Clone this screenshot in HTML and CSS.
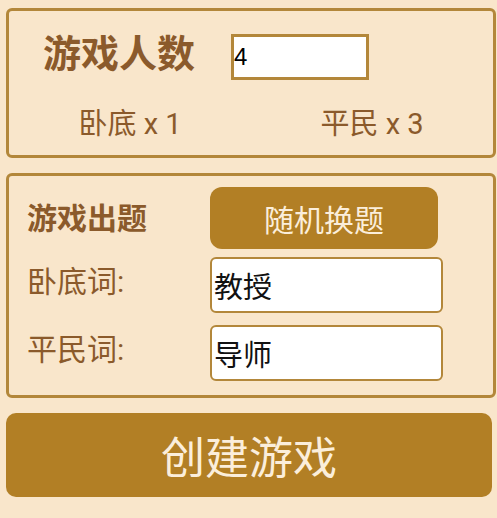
FILE: index.html
```html
<!DOCTYPE html>
<html lang="zh-CN">
<head>
    <meta charset="UTF-8">
    <meta name="viewport" content="width=device-width, initial-scale=1.0">
    <title>创建游戏</title>
    <link rel="stylesheet" href="styles.css">
</head>
<body>

    <div class="panel count-panel">
        <div class="count-row">
            <span class="count-title">游戏人数</span>
            <input class="count-input" type="text" value="4">
        </div>
        <div class="role-row">
            <span>卧底 x 1</span>
            <span>平民 x 3</span>
        </div>
    </div>

    <div class="panel word-panel">
        <div class="word-row first">
            <span class="word-title">游戏出题</span>
            <button class="swap-btn">随机换题</button>
        </div>
        <div class="word-row">
            <label class="word-label" for="spy-word">卧底词:</label>
            <input class="word-input" id="spy-word" type="text" value="教授">
        </div>
        <div class="word-row last">
            <label class="word-label" for="civ-word">平民词:</label>
            <input class="word-input" id="civ-word" type="text" value="导师">
        </div>
    </div>

    <button class="create-btn">创建游戏</button>

</body>
</html>
```

FILE: styles.css
```css
body {
    margin: 0;
    padding: 8px 0 0 6px;
    background-color: #f9e6cb;
    font-family: Roboto, "Noto Sans CJK SC", sans-serif;
    color: #8b5a2b;
}
.panel {
    box-sizing: border-box;
    width: 490px;
    border: 3px solid #b3873a;
    border-radius: 6px;
}
.count-panel {
    height: 150px;
    margin-bottom: 15px;
}
.count-row {
    display: flex;
    align-items: center;
    padding: 23px 0 0 34px;
}
.count-title {
    font-size: 38px;
    font-weight: bold;
    line-height: 40px;
    width: 188px;
    margin-top: -6px;
}
.count-input {
    box-sizing: border-box;
    width: 138px;
    height: 46px;
    border: 3px solid #b3873a;
    border-radius: 0;
    padding: 0;
    background: #fff;
    font-family: "Liberation Sans", sans-serif;
    font-size: 24px;
    color: #000;
    outline: none;
}
.role-row {
    display: grid;
    grid-template-columns: 1fr 1fr;
    margin-top: 28px;
    font-size: 29px;
    line-height: 32px;
    text-align: center;
}
.word-panel {
    height: 225px;
    margin-bottom: 15px;
    padding: 11px 0 0 18px;
}
.word-row {
    display: flex;
    align-items: center;
    margin-bottom: 8px;
}
.word-row.last {
    margin-top: 12px;
}
.word-title {
    width: 183px;
    font-size: 30px;
    font-weight: bold;
    margin-top: -4px;
}
.word-label {
    width: 183px;
    font-size: 30px;
    margin-top: -12px;
}
.swap-btn {
    width: 228px;
    height: 62px;
    border: none;
    border-radius: 12px;
    background-color: #b27f25;
    color: #fbeedb;
    font-family: Roboto, "Noto Sans CJK SC", sans-serif;
    font-size: 30px;
    padding: 0;
}
.word-input {
    box-sizing: border-box;
    width: 233px;
    height: 56px;
    border: 2px solid #b3873a;
    border-radius: 6px;
    padding: 0 0 0 2px;
    background: #fff;
    font-family: Roboto, "Noto Sans CJK SC", sans-serif;
    font-size: 29px;
    color: #111;
    outline: none;
}
.create-btn {
    display: block;
    width: 486px;
    height: 84px;
    border: none;
    border-radius: 10px;
    background-color: #b27f25;
    color: #fbeedb;
    font-family: Roboto, "Noto Sans CJK SC", sans-serif;
    font-size: 44px;
    padding: 0;
}
```
